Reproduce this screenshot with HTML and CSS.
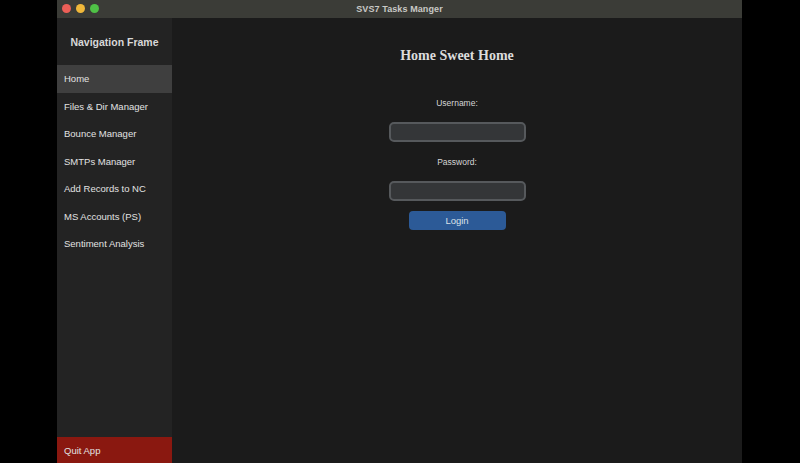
FILE: index.html
```html
<!DOCTYPE html>
<html>
<head>
<meta charset="utf-8">
<link rel="stylesheet" href="styles.css">
</head>
<body>
<div class="stage">
  <div class="window">
    <div class="titlebar">
      <div class="lights">
        <span class="light red"></span>
        <span class="light yellow"></span>
        <span class="light green"></span>
      </div>
      <div class="wtitle">SVS7 Tasks Manger</div>
    </div>
    <div class="content">
      <aside class="sidebar">
        <div class="navtitle">Navigation Frame</div>
        <div class="navitem active">Home</div>
        <div class="navitem">Files &amp; Dir Manager</div>
        <div class="navitem">Bounce Manager</div>
        <div class="navitem">SMTPs Manager</div>
        <div class="navitem">Add Records to NC</div>
        <div class="navitem">MS Accounts (PS)</div>
        <div class="navitem">Sentiment Analysis</div>
        <div class="spacer"></div>
        <div class="navitem quit">Quit App</div>
      </aside>
      <main class="main">
        <h1 class="heading">Home Sweet Home</h1>
        <div class="label">Username:</div>
        <div class="input"></div>
        <div class="label">Password:</div>
        <div class="input"></div>
        <div class="button">Login</div>
      </main>
    </div>
  </div>
</div>
</body>
</html>
```
FILE: styles.css
```css
html, body {
  margin: 0;
  padding: 0;
  background: #000;
  height: 100%;
  overflow: hidden;
}
.stage {
  display: flex;
  justify-content: flex-start;
  padding-left: 57px;
  height: 463px;
}
.window {
  width: 685px;
  height: 463px;
  display: flex;
  flex-direction: column;
  font-family: "Liberation Sans", Arial, sans-serif;
}
.titlebar {
  height: 18px;
  background: #3b3c37;
  position: relative;
  display: flex;
  align-items: center;
  justify-content: center;
}
.lights {
  position: absolute;
  left: 5px;
  top: 4px;
  display: flex;
  gap: 5px;
}
.light {
  width: 9px;
  height: 9px;
  border-radius: 50%;
  display: block;
}
.red { background: #ec5f57; }
.yellow { background: #f0b83a; }
.green { background: #4fc146; }
.wtitle {
  color: #c9c9c6;
  font-size: 9px;
  font-weight: bold;
  letter-spacing: 0.1px;
}
.content {
  flex: 1;
  display: flex;
  min-height: 0;
}
.sidebar {
  width: 115px;
  background: #232323;
  display: flex;
  flex-direction: column;
}
.navtitle {
  color: #d8d8d8;
  font-size: 10.5px;
  font-weight: bold;
  text-align: center;
  height: 47px;
  line-height: 48px;
}
.navitem {
  height: 27.5px;
  line-height: 27.5px;
  padding-left: 7px;
  font-size: 9.5px;
  color: #e2e2e2;
}
.navitem.active {
  background: #3f3f3f;
}
.spacer { flex: 1; }
.navitem.quit {
  background: #8a1810;
  height: 26px;
  line-height: 28px;
}
.main {
  flex: 1;
  background: #1b1b1b;
  display: flex;
  flex-direction: column;
  align-items: center;
  padding-top: 27px;
}
.heading {
  margin: 0;
  font-family: "Liberation Serif", "Times New Roman", serif;
  font-weight: bold;
  font-size: 14px;
  color: #dcdcdc;
  height: 22px;
  line-height: 22px;
}
.label {
  color: #d6d6d6;
  font-size: 8.5px;
  height: 14px;
  line-height: 14px;
  margin-top: 29px;
  margin-bottom: 12px;
}
.input + .label {
  margin-top: 13px;
}
.input {
  width: 133px;
  height: 16px;
  background: #343638;
  border: 2px solid #56595c;
  border-radius: 5px;
}
.button {
  margin-top: 10px;
  width: 97px;
  height: 19px;
  line-height: 19px;
  background: #2c5a97;
  border-radius: 4px;
  color: #dbe0e8;
  font-size: 9.5px;
  text-align: center;
}
```
